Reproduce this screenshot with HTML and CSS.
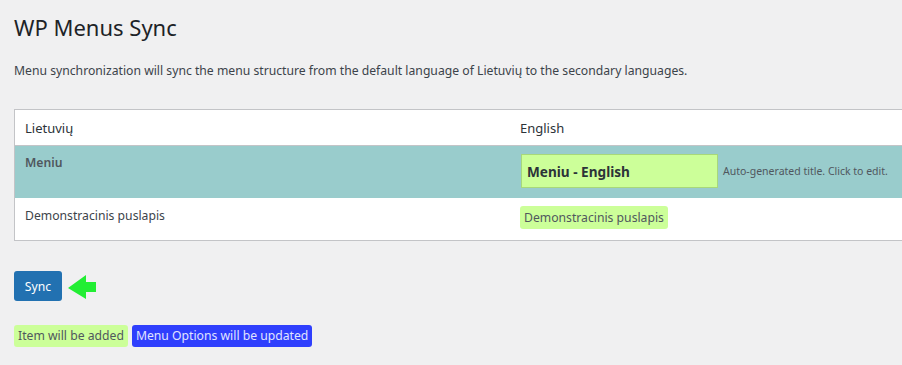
FILE: index.html
```html
<!DOCTYPE html>
<html>
<head>
<meta charset="utf-8">
<link rel="stylesheet" href="styles.css">
</head>
<body>
<div class="wrap">
  <h1 class="title">WP Menus Sync</h1>
  <p class="intro">Menu synchronization will sync the menu structure from the default language of Lietuvių to the secondary languages.</p>
  <table class="sync-table">
    <thead>
      <tr><th class="col-a">Lietuvių</th><th class="col-b">English</th></tr>
    </thead>
    <tbody>
      <tr class="row-menu">
        <td class="menu-name">Meniu</td>
        <td><div class="title-edit"><span class="title-input">Meniu - English</span><span class="hint">Auto-generated title. Click to edit.</span></div></td>
      </tr>
      <tr class="row-item">
        <td>Demonstracinis puslapis</td>
        <td><span class="badge badge-add">Demonstracinis puslapis</span></td>
      </tr>
    </tbody>
  </table>
  <div class="actions">
    <button class="btn-sync">Sync</button>
    <svg class="arrow" width="28" height="24" viewBox="0 0 28 24"><polygon points="0,13 18,0 18,7 28,7 28,17 18,17 18,24" fill="#22ee33"/></svg>
  </div>
  <div class="legend">
    <span class="badge badge-add">Item will be added</span>
    <span class="badge badge-update">Menu Options will be updated</span>
  </div>
</div>
</body>
</html>
```
FILE: styles.css
```css
html, body { margin: 0; padding: 0; }
body {
  background: #f0f0f1;
  font-family: "Noto Sans", "Open Sans", sans-serif;
  font-size: 13px;
  color: #3c434a;
  width: 902px;
  overflow: hidden;
}
.wrap { padding: 0 0 0 14px; }
.title {
  margin: 0;
  padding: 12px 0 0;
  font-size: 22px;
  font-weight: 400;
  line-height: 30px;
  color: #1d2327;
}
.intro {
  margin: 19px 0 0;
  line-height: 20px;
  font-size: 12.2px;
}
.sync-table {
  margin-top: 28px;
  width: 906px;
  border: 1px solid #c3c4c7;
  border-collapse: collapse;
  background: #fff;
}
.sync-table th {
  text-align: left;
  font-weight: 400;
  font-size: 13px;
  color: #2c3338;
  height: 35px;
  padding: 0 10px;
  border-bottom: 1px solid #c3c4c7;
}
.col-a { width: 485px; }
.sync-table td {
  padding: 0 10px;
  vertical-align: top;
  font-size: 12.2px;
}
.sync-table td + td, .sync-table th + th { padding-left: 0; }
.row-menu { background: #99cccc; height: 52px; }
.row-menu td { padding-top: 8px; }
.menu-name { font-weight: 600; color: #50575e; }
.title-edit { display: flex; align-items: center; gap: 5px; margin-left: 1px; }
.title-input {
  box-sizing: border-box;
  width: 197px;
  height: 34px;
  background: #ccff99;
  border: 1px solid #a8d87a;
  display: flex;
  align-items: center;
  padding-left: 5px;
  font-weight: 700;
  font-size: 13.6px;
  color: #2c3338;
}
.hint { font-size: 10.5px; color: #50575e; }
.row-item { height: 43px; }
.row-item td { padding-top: 9px; }
.badge {
  display: inline-block;
  border-radius: 3px;
  padding: 0 4px;
  line-height: 23px;
  font-size: 12.2px;
}
.row-item .badge { margin-top: -1px; }
.badge-add { background: #ccff99; color: #50575e; }
.badge-update { background: #2f3ffd; color: #e0e4ff; }
.actions {
  margin-top: 30px;
  display: flex;
  align-items: center;
  gap: 6px;
}
.btn-sync {
  font-family: inherit;
  font-size: 12.2px;
  color: #fff;
  background: #2271b1;
  border: 0;
  border-radius: 3px;
  width: 48px;
  height: 30px;
  padding: 0;
}
.arrow { margin-top: 2px; }
.legend {
  margin-top: 24px;
  display: flex;
  gap: 4px;
}
.legend .badge { line-height: 22px; }
```
